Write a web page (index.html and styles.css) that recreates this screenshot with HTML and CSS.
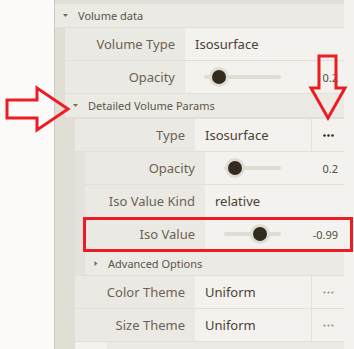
FILE: index.html
```html
<!DOCTYPE html>
<html>
<head>
<meta charset="utf-8">
<link rel="stylesheet" href="styles.css">
</head>
<body>
<div class="app">
  <div class="side"></div>
  <div class="panel">
    <div class="strip"></div>
    <div class="group">
      <div class="ghead"><span class="caret"><svg width="5" height="3" viewBox="0 0 5 3"><polygon points="0,0 5,0 2.5,3"/></svg></span><span>Volume data</span></div>
      <div class="kids">
        <div class="row"><div class="lab">Volume Type</div><div class="val"><span class="txt">Isosurface</span></div></div>
        <div class="row"><div class="lab">Opacity</div><div class="val"><div class="slider"><div class="rail"></div><div class="handle" style="left:20%"></div></div><div class="num">0.2</div></div></div>
        <div class="group">
          <div class="ghead"><span class="caret"><svg width="5" height="3" viewBox="0 0 5 3"><polygon points="0,0 5,0 2.5,3"/></svg></span><span>Detailed Volume Params</span></div>
          <div class="kids kids-gap">
            <div class="row"><div class="lab">Type</div><div class="val"><span class="txt">Isosurface</span></div><div class="btn btn-on"><svg width="11" height="3" viewBox="0 0 11 3"><circle cx="1.5" cy="1.5" r="1.3"/><circle cx="5.5" cy="1.5" r="1.3"/><circle cx="9.5" cy="1.5" r="1.3"/></svg></div></div>
            <div class="nested">
              <div class="row"><div class="lab">Opacity</div><div class="val"><div class="slider"><div class="rail"></div><div class="handle" style="left:20%"></div></div><div class="num">0.2</div></div></div>
              <div class="row"><div class="lab">Iso Value Kind</div><div class="val"><span class="txt">relative</span></div></div>
              <div class="row"><div class="lab">Iso Value</div><div class="val"><div class="slider"><div class="rail"></div><div class="handle" style="left:63%"></div></div><div class="num">-0.99</div></div></div>
              <div class="ghead ghead-gap"><span class="caret"><svg width="5" height="5" viewBox="0 0 5 5"><polygon points="1.5,0 4.5,2.5 1.5,5"/></svg></span><span>Advanced Options</span></div>
            </div>
            <div class="row"><div class="lab">Color Theme</div><div class="val"><span class="txt">Uniform</span></div><div class="btn"><svg width="11" height="3" viewBox="0 0 11 3"><circle cx="1.5" cy="1.5" r="1.1"/><circle cx="5.5" cy="1.5" r="1.1"/><circle cx="9.5" cy="1.5" r="1.1"/></svg></div></div>
            <div class="row"><div class="lab">Size Theme</div><div class="val"><span class="txt">Uniform</span></div><div class="btn"><svg width="11" height="3" viewBox="0 0 11 3"><circle cx="1.5" cy="1.5" r="1.1"/><circle cx="5.5" cy="1.5" r="1.1"/><circle cx="9.5" cy="1.5" r="1.1"/></svg></div></div>
            <div class="row row-last"><div class="cell-a"></div><div class="cell-b"></div></div>
          </div>
        </div>
      </div>
    </div>
  </div>
  <div class="scroll"></div>
</div>
<svg class="marks" width="354" height="349" viewBox="0 0 354 349">
  <polygon points="7,100 37,100 37,88 68,109 37,130 37,118 7,118"/>
  <polygon points="319,56 336,56 336,88 345,88 328,118 311,88 319,88"/>
  <rect x="84.5" y="218.5" width="267" height="32"/>
</svg>
</body>
</html>
```

FILE: styles.css
```css
* { box-sizing: border-box; }
html, body { margin: 0; padding: 0; }
body {
  width: 354px;
  height: 349px;
  overflow: hidden;
  position: relative;
  background: #f3f2ef;
  font-family: "Noto Sans", "Open Sans", sans-serif;
}
.app { display: flex; height: 349px; }
.side { width: 55px; flex: none; background: #fcfbfa; border-right: 1px solid #cfcabf; }
.panel { width: 289px; flex: none; background: #e1ded6; overflow: hidden; }
.scroll { flex: 1; background: #f3f2ef; }
.strip { height: 4px; background: #e3e0d9; }

.ghead {
  height: 24px;
  display: flex;
  align-items: center;
  background: #eceae5;
  border-bottom: 1px solid #e2dfd8;
  color: #5c5447;
  font-size: 11px;
  white-space: nowrap;
}
.ghead-gap { margin-top: 1px; }
.caret { width: 23px; flex: none; padding-left: 8px; display: flex; align-items: center; }
.caret svg { fill: #766c5e; display: block; }

.kids { padding-left: 10px; }
.kids-gap { padding-top: 1px; }
.nested { padding-left: 10px; background: #e5e2db; }

.row {
  height: 33px;
  display: flex;
  background: #f3f2ee;
  border-bottom: 1px solid #e2dfd8;
}
.lab {
  width: 120px;
  flex: none;
  background: #ebe9e4;
  padding-right: 10px;
  text-align: right;
  font-size: 13px;
  line-height: 32px;
  color: #6b6253;
  white-space: nowrap;
}
.val {
  flex: 1;
  display: flex;
  align-items: center;
  padding-left: 10px;
  min-width: 0;
}
.txt { font-size: 13px; color: #4a4236; white-space: nowrap; }
.slider { flex: 1; margin-left: 9px; position: relative; height: 20px; display: flex; align-items: center; }
.rail { width: 100%; height: 4px; border-radius: 2px; background: #dfdcd4; }
.handle {
  position: absolute;
  top: 3px;
  width: 14px;
  height: 14px;
  margin-left: -7px;
  border-radius: 50%;
  background: #332b1f;
  box-shadow: 0 0 0 3px #e0ddd5;
}
.num {
  width: 63px;
  flex: none;
  text-align: right;
  padding-right: 6px;
  font-size: 11px;
  color: #554c40;
}
.btn {
  width: 33px;
  flex: none;
  border-left: 1px solid #e4e1da;
  display: flex;
  align-items: center;
  justify-content: center;
}
.btn svg { fill: #9c917f; display: block; }
.btn-on svg { fill: #332b1f; }
.row-last { border-bottom: none; }
.cell-a { width: 32px; background: #f3f2ee; }
.cell-b { flex: 1; background: #eceae5; }

.marks {
  position: absolute;
  left: 0;
  top: 0;
  pointer-events: none;
}
.marks polygon, .marks rect {
  fill: none;
  stroke: #ec1c24;
  stroke-width: 3;
}
```
